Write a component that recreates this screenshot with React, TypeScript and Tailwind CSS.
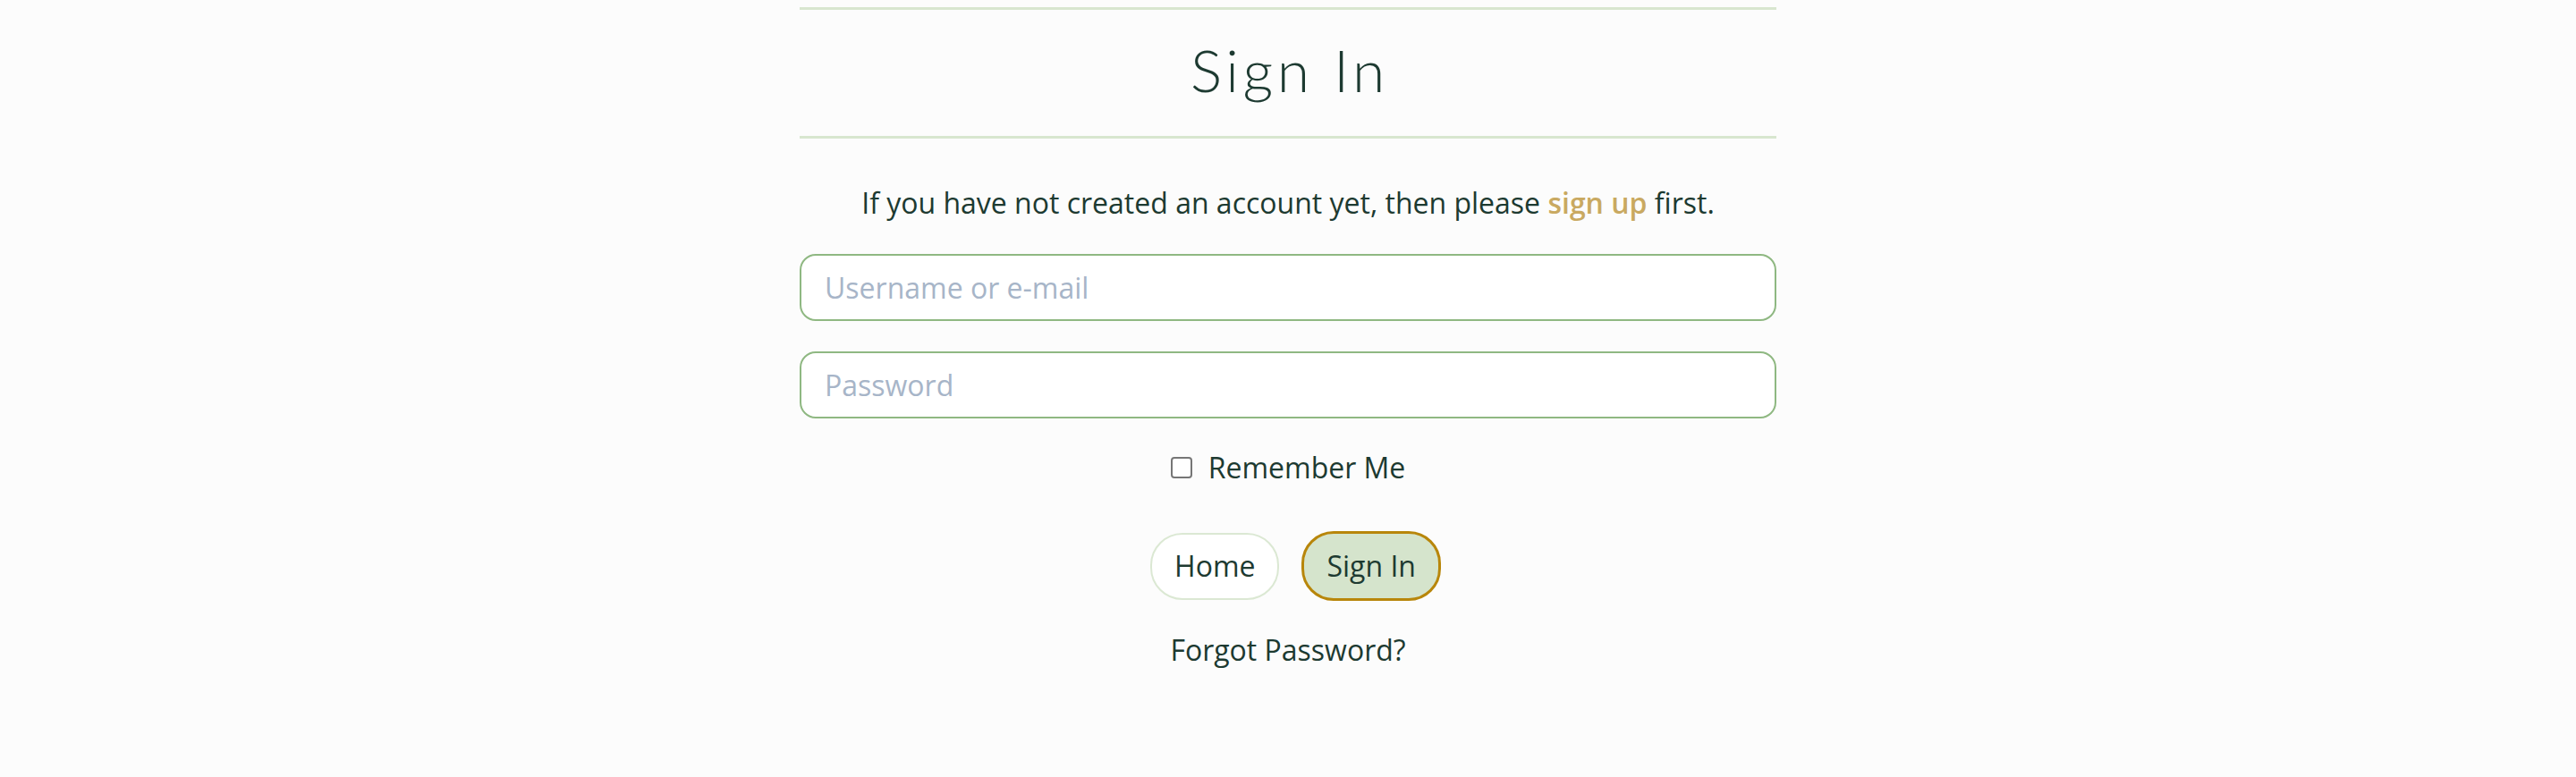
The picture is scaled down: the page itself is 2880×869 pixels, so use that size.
export default function App() {
  return (
    <div className="min-h-[869px] w-full bg-[#fcfcfc] pt-[8px] font-['Open_Sans',sans-serif] text-[#1d3a31]">
      <div className="mx-auto w-[1092px]">
        {/* Title */}
        <div className="flex h-[147px] items-center justify-center border-y-[3px] border-[#d8e6cf]">
          <h1 className="mb-[9px] pl-[4px] font-['Lato',sans-serif] text-[66px] font-light tracking-[4.5px]">Sign In</h1>
        </div>

        <p className="mt-[48px] text-center text-[32px] leading-[1.5]">
          If you have not created an account yet, then please{" "}
          <a href="#" className="font-semibold text-[#c9a961]">
            sign up
          </a>{" "}
          first.
        </p>

        <form className="mt-[33px] flex flex-col">
          <input
            type="text"
            placeholder="Username or e-mail"
            className="h-[75px] rounded-[18px] border-2 border-[#8fb882] bg-white px-[26px] text-[32px] outline-none placeholder:text-[#a7b5c8]"
          />
          <input
            type="password"
            placeholder="Password"
            className="mt-[34px] h-[75px] rounded-[18px] border-2 border-[#8fb882] bg-white px-[26px] text-[32px] outline-none placeholder:text-[#a7b5c8]"
          />

          <label className="mt-[31px] flex items-center justify-center gap-[18px] text-[32px] leading-[1.5]">
            <input
              type="checkbox"
              className="h-[24px] w-[24px] shrink-0 appearance-none rounded-[4px] border-2 border-[#767676] bg-white"
            />
            Remember Me
          </label>

          <div className="mt-[47px] flex items-center justify-center gap-[25px] pl-[17px]">
            <a
              href="#"
              className="flex h-[75px] items-center rounded-[36px] border-2 border-[#dbe8d3] bg-white px-[25px] text-[32px]"
            >
              Home
            </a>
            <button
              type="submit"
              className="flex h-[78px] items-center rounded-[36px] border-[3px] border-[#b8860b] bg-[#d5e4cc] px-[25px] text-[32px]"
            >
              Sign In
            </button>
          </div>

          <a href="#" className="mt-[31px] text-center text-[32px] leading-[1.5]">
            Forgot Password?
          </a>
        </form>
      </div>
    </div>
  );
}
